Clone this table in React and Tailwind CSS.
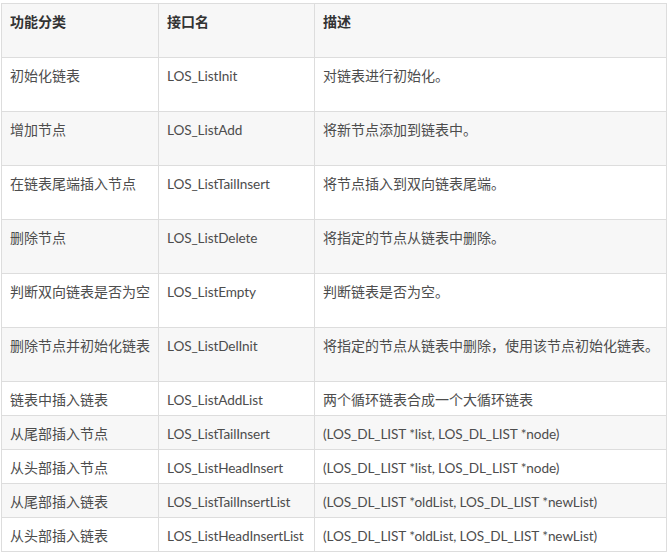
import React from "react";

const rows = [
  ["初始化链表", "LOS_ListInit", "对链表进行初始化。", true, false],
  ["增加节点", "LOS_ListAdd", "将新节点添加到链表中。", true, false],
  ["在链表尾端插入节点", "LOS_ListTailInsert", "将节点插入到双向链表尾端。", true, false],
  ["删除节点", "LOS_ListDelete", "将指定的节点从链表中删除。", true, false],
  ["判断双向链表是否为空", "LOS_ListEmpty", "判断链表是否为空。", true, false],
  ["删除节点并初始化链表", "LOS_ListDelInit", "将指定的节点从链表中删除，使用该节点初始化链表。", true, false],
  ["链表中插入链表", "LOS_ListAddList", "两个循环链表合成一个大循环链表", false, false],
  ["从尾部插入节点", "LOS_ListTailInsert", "(LOS_DL_LIST *list, LOS_DL_LIST *node)", false, true],
  ["从头部插入节点", "LOS_ListHeadInsert", "(LOS_DL_LIST *list, LOS_DL_LIST *node)", false, true],
  ["从尾部插入链表", "LOS_ListTailInsertList", "(LOS_DL_LIST *oldList, LOS_DL_LIST *newList)", false, true],
  ["从头部插入链表", "LOS_ListHeadInsertList", "(LOS_DL_LIST *oldList, LOS_DL_LIST *newList)", false, true],
];

function Cell({ children, tall, header, latin }) {
  return (
    <div
      className={`border-r border-b border-[#dddddd] pl-[8px] pt-[8px] leading-[20px] whitespace-nowrap ${
        tall ? "h-[54px]" : "h-[34px]"
      } ${header ? "font-bold text-[#333333]" : "text-[#4d4d4d]"} ${
        latin ? "text-[13.6px] tracking-[-0.1px]" : ""
      }`}
    >
      {children}
    </div>
  );
}

export default function App() {
  return (
    <div
      className="bg-white w-[668px] h-[552px] pt-[3px] pl-[1px] text-[14px]"
      style={{ fontFamily: 'Lato, "Noto Sans CJK SC", sans-serif' }}
    >
      <div className="w-[666px] border-l border-t border-[#dddddd]">
        <div className="grid grid-cols-[157px_156px_352px] bg-[#f7f7f7]">
          <Cell tall header>功能分类</Cell>
          <Cell tall header>接口名</Cell>
          <Cell tall header>描述</Cell>
        </div>
        {rows.map((r, i) => (
          <div
            key={i}
            className={`grid grid-cols-[157px_156px_352px] ${
              i % 2 === 1 ? "bg-[#f7f7f7]" : "bg-white"
            }`}
          >
            <Cell tall={r[3]}>{r[0]}</Cell>
            <Cell tall={r[3]} latin>{r[1]}</Cell>
            <Cell tall={r[3]} latin={r[4]}>{r[2]}</Cell>
          </div>
        ))}
      </div>
    </div>
  );
}
